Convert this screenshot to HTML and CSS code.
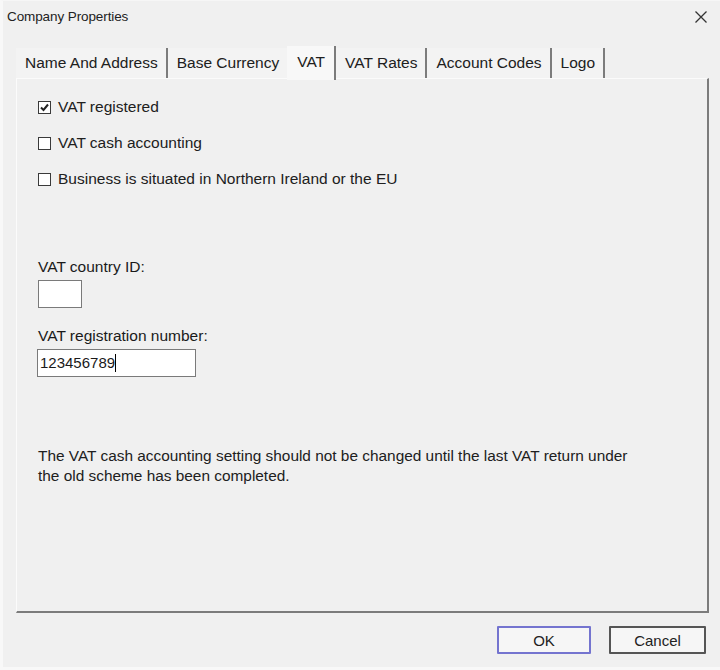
FILE: index.html
```html
<!DOCTYPE html>
<html>
<head>
<meta charset="utf-8">
<link rel="stylesheet" href="styles.css">
</head>
<body>
<div class="window">
  <div class="titlebar">
    <span class="title">Company Properties</span>
    <svg class="close" width="14" height="14" viewBox="0 0 14 14"><path d="M1.5 1.5 L12.5 12.5 M12.5 1.5 L1.5 12.5" stroke="#333" stroke-width="1.3" fill="none"/></svg>
  </div>
  <div class="content">
    <div class="tabs">
      <div class="tab">Name And Address</div>
      <div class="tab nosep">Base Currency</div>
      <div class="tab active">VAT</div>
      <div class="tab">VAT Rates</div>
      <div class="tab">Account Codes</div>
      <div class="tab">Logo</div>
    </div>
    <div class="panel">
      <label class="check"><span class="box checked"><svg width="11" height="11" viewBox="0 0 11 11"><path d="M2 5.5 L4.5 8 L9 2.5" stroke="#222" stroke-width="2" fill="none"/></svg></span>VAT registered</label>
      <label class="check"><span class="box"></span>VAT cash accounting</label>
      <label class="check"><span class="box"></span>Business is situated in Northern Ireland or the EU</label>
      <div class="field first">
        <div class="flabel">VAT country ID:</div>
        <div class="input small"></div>
      </div>
      <div class="field">
        <div class="flabel">VAT registration number:</div>
        <div class="input wide">123456789<span class="caret"></span></div>
      </div>
      <p class="note">The VAT cash accounting setting should not be changed until the last VAT return under<br>the old scheme has been completed.</p>
    </div>
    <div class="buttons">
      <div class="btn ok">OK</div>
      <div class="btn cancel">Cancel</div>
    </div>
  </div>
</div>
</body>
</html>
```
FILE: styles.css
```css
html, body {
  margin: 0;
  padding: 0;
  background: #f0f0f0;
}
body {
  width: 720px;
  height: 670px;
  overflow: hidden;
  font-family: "Liberation Sans", Arial, sans-serif;
  color: #1a1a1a;
}
.window {
  box-sizing: border-box;
  width: 720px;
  height: 670px;
  background: #f0f0f0;
  border-left: 3px solid #f8f8f8;
  border-bottom: 3px solid #f8f8f8;
  border-top: 1px solid #f6f6f6;
  display: flex;
  flex-direction: column;
}
.titlebar {
  height: 31px;
  display: flex;
  align-items: center;
  justify-content: space-between;
  padding: 0 12px 0 4px;
}
.title {
  font-size: 13.5px;
  letter-spacing: -0.1px;
  color: #222;
}
.content {
  flex: 1;
  display: flex;
  flex-direction: column;
  padding: 14px 11px 0 13px;
}
.tabs {
  display: flex;
  height: 32px;
  align-items: flex-end;
}
.tab {
  height: 30px;
  box-sizing: border-box;
  padding: 0 8px 0 9px;
  font-size: 15.5px;
  line-height: 30px;
  border-right: 2px solid #7c7c7c;
  background: #f3f3f3;
  color: #202020;
}
.tab.nosep {
  border-right: none;
}
.tab.active {
  height: 34px;
  line-height: 32px;
  background: #f8f8f8;
  padding: 0 9px 0 10px;
  margin-bottom: -2px;
  position: relative;
}
.panel {
  height: 535px;
  box-sizing: border-box;
  border-top: 1px solid #fbfbfb;
  border-left: 1px solid #fbfbfb;
  border-right: 2px solid #7c7c7c;
  border-bottom: 2px solid #7c7c7c;
  padding: 19px 0 0 21px;
  display: flex;
  flex-direction: column;
  font-size: 15.5px;
}
.check {
  display: flex;
  align-items: center;
  height: 18px;
  margin-bottom: 18px;
  color: #202020;
}
.box {
  width: 13px;
  height: 13px;
  box-sizing: border-box;
  border: 1.5px solid #3a3a3a;
  background: #fff;
  margin-right: 7px;
  display: flex;
  align-items: center;
  justify-content: center;
}
.box svg {
  display: block;
}
.field {
  display: flex;
  flex-direction: column;
}
.field.first {
  margin-top: 51px;
}
.flabel {
  height: 20px;
  line-height: 20px;
  margin-bottom: 3px;
}
.input {
  box-sizing: border-box;
  background: #fff;
  border: 1px solid #7a7a7a;
  height: 28px;
  line-height: 26px;
  font-size: 15px;
  padding-left: 2px;
  display: flex;
  align-items: center;
}
.input.small {
  width: 44px;
  margin-bottom: 18px;
}
.input.wide {
  width: 159px;
  margin-left: -1px;
}
.caret {
  display: inline-block;
  width: 1px;
  height: 18px;
  background: #000;
}
.note {
  margin: 69px 0 0 0;
  font-size: 15.4px;
  line-height: 20px;
  color: #202020;
}
.buttons {
  display: flex;
  justify-content: flex-end;
  gap: 18px;
  padding-top: 13px;
  padding-right: 3px;
}
.btn {
  box-sizing: border-box;
  height: 28px;
  display: flex;
  align-items: center;
  justify-content: center;
  font-size: 15px;
  background: #f6f6f6;
  color: #222;
  border-radius: 1px;
}
.btn.ok {
  width: 94px;
  border: 2px solid #7474cf;
}
.btn.cancel {
  width: 97px;
  border: 2px solid #555;
}
```
